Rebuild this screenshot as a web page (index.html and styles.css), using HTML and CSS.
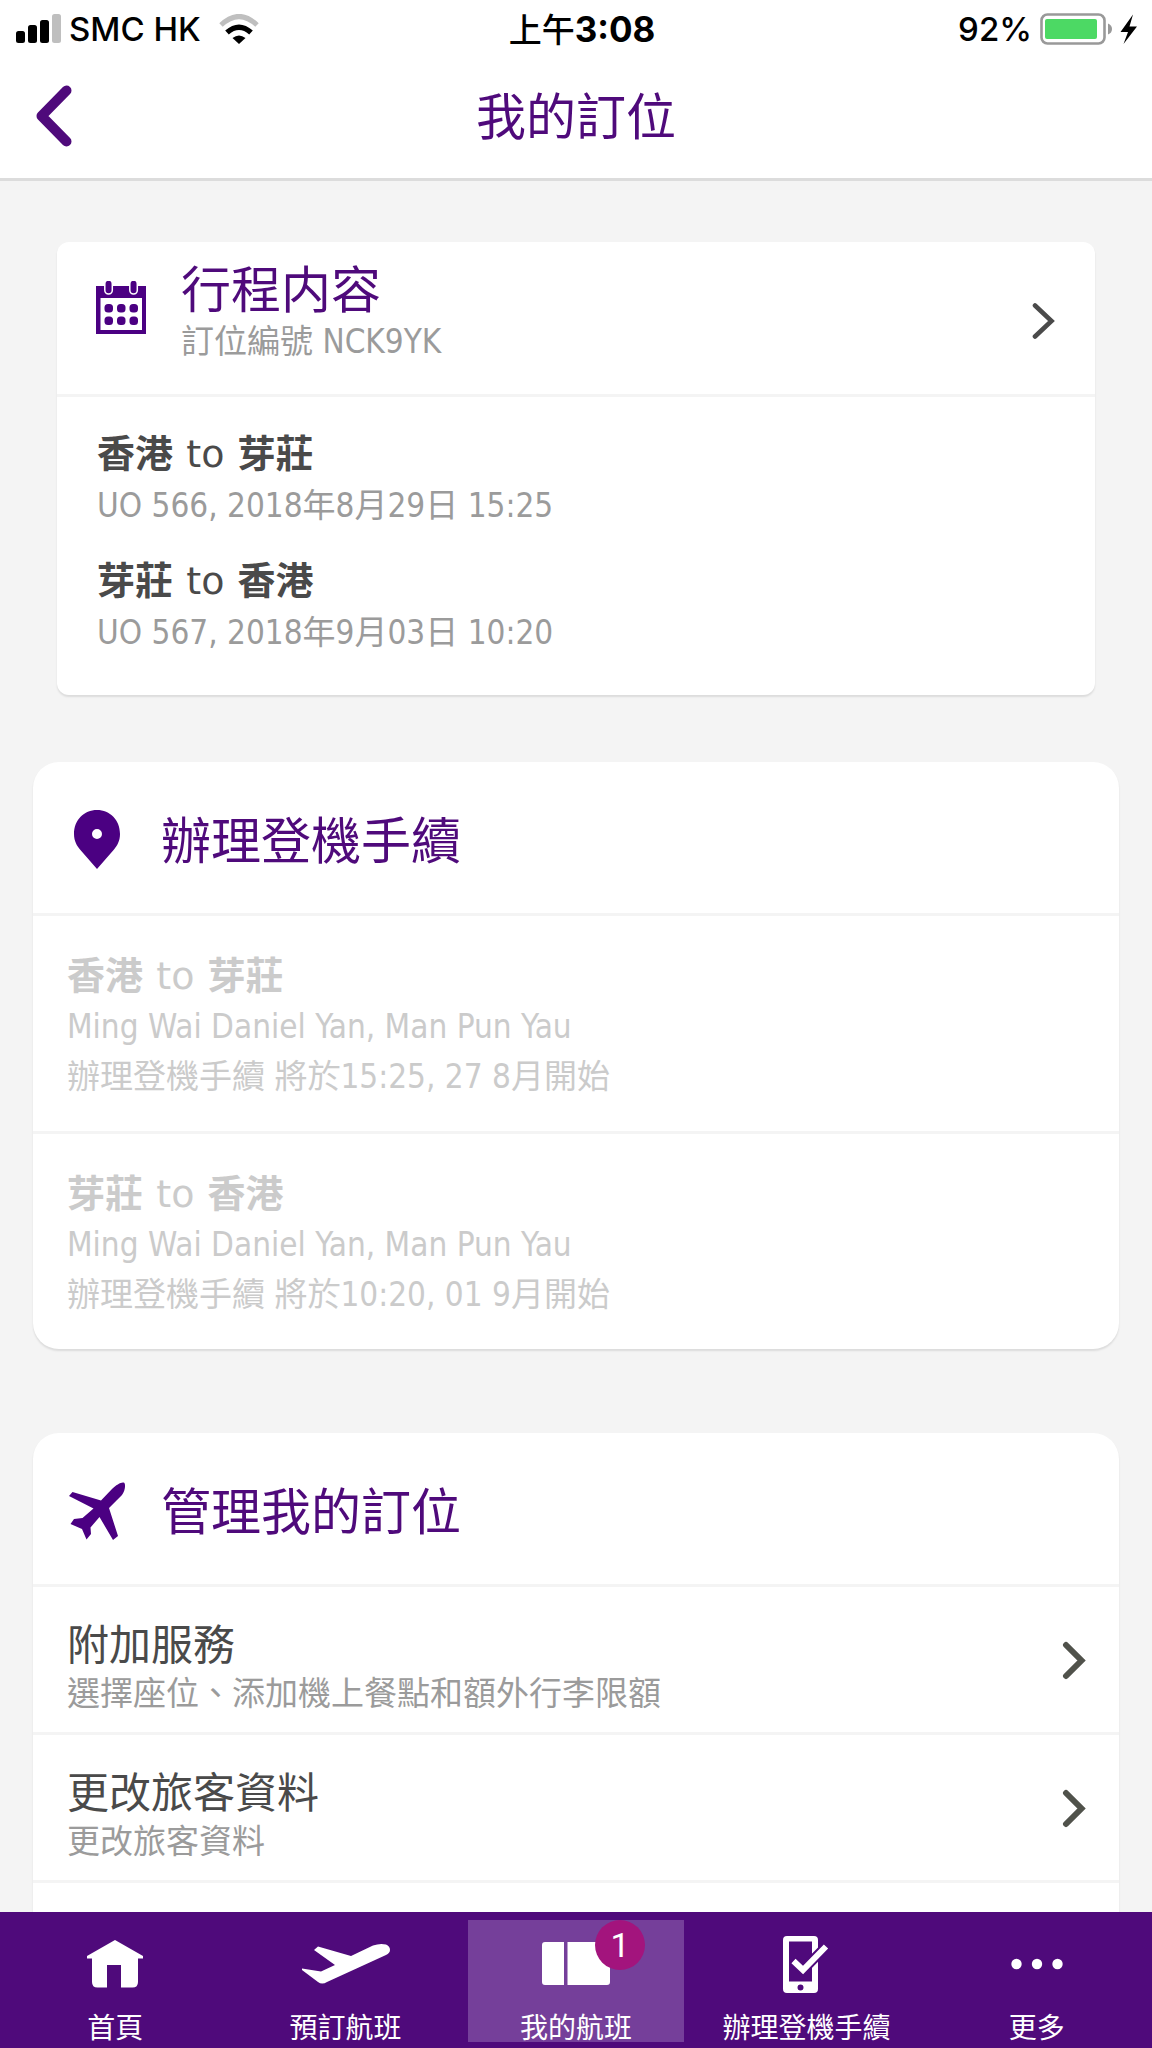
FILE: index.html
```html
<!DOCTYPE html>
<html lang="zh-Hant-HK">
<head>
<meta charset="utf-8">
<meta name="viewport" content="width=device-width, initial-scale=1">
<title>我的訂位</title>
<link rel="stylesheet" href="styles.css">
</head>
<body>
<div class="app">
  <div class="status">
    <div class="status-left">
      <svg width="45" height="30" viewBox="0 0 45 30" aria-hidden="true">
        <rect x="0" y="17" width="9" height="12" rx="2.5"/>
        <rect x="12" y="11" width="9" height="18" rx="2.5"/>
        <rect x="24" y="6" width="9" height="23" rx="2.5"/>
        <rect x="36" y="0" width="9" height="29" rx="2.5" fill="#bfbfbf"/>
      </svg>
      <span class="carrier">SMC HK</span>
      <svg class="wifi" width="40" height="31" viewBox="0 0 40 31" fill="none" aria-hidden="true">
        <path d="M2 11Q20 -6 38 11" stroke="#bfbfbf" stroke-width="5"/>
        <path d="M8 18.500Q20 8 32 18.500" stroke="#000" stroke-width="5.500"/>
        <path d="M13.500 24Q20 19 26.500 24L20 30Z" fill="#000"/>
      </svg>
    </div>
    <div class="clock"><span class="noon">上午</span>3:08</div>
    <div class="status-right">
      <span>92%</span>
      <svg width="98" height="33" viewBox="0 0 98 33" aria-hidden="true">
        <rect x="1.500" y="1.500" width="63" height="29" rx="6" fill="none" stroke="#999" stroke-width="2.600"/>
        <rect x="5" y="6" width="52" height="20" rx="2" fill="#4cd964"/>
        <path d="M68 10.500Q72 12 72 16T68 21.500Z" fill="#999"/>
        <path d="M93 1.500L80.500 19H88L83.500 31L97 13.500H89.500Z"/>
      </svg>
    </div>
  </div>

  <header class="topbar">
    <button class="back" type="button" aria-label="返回">
      <svg width="36" height="62" viewBox="0 0 36 62" fill="none" stroke="currentColor" stroke-width="10" stroke-linecap="round" stroke-linejoin="round"><path d="M30.500 5.500L5.500 31L30.500 56.500"/></svg>
    </button>
    <h1 class="topbar-title">我的訂位</h1>
  </header>

  <main class="content">
    <section class="card card-trip">
      <a class="trip-head" href="#trip">
        <svg class="trip-icon" width="50" height="53" viewBox="0 0 50 53" aria-hidden="true">
          <path fill="#4b0082" fill-rule="evenodd" d="M0 5H50V53H0ZM4.500 17V49H46V17Z"/>
          <g fill="#4b0082" stroke="#fff" stroke-width="1.500">
            <rect x="8.800" y="-1" width="7.500" height="14" rx="3.700"/>
            <rect x="33.800" y="-1" width="7.500" height="14" rx="3.700"/>
          </g>
          <g fill="#4b0082">
            <rect x="8.500" y="23" width="8.500" height="8.500" rx="3.500"/><rect x="21" y="23" width="8.500" height="8.500" rx="3.500"/><rect x="33.500" y="23" width="8.500" height="8.500" rx="3.500"/>
            <rect x="8.500" y="35.500" width="8.500" height="8.500" rx="3.500"/><rect x="21" y="35.500" width="8.500" height="8.500" rx="3.500"/><rect x="33.500" y="35.500" width="8.500" height="8.500" rx="3.500"/>
          </g>
        </svg>
        <div class="grow">
          <h2 class="card-title">行程内容</h2>
          <p class="booking">訂位編號 NCK9YK</p>
        </div>
        <svg class="trip-chevron" width="23" height="38" viewBox="0 0 23 38" fill="none" stroke="#4a4a4a" stroke-width="4.600" stroke-linecap="round"><path d="M3 3.500L19.500 19L3 34.500"/></svg>
      </a>
      <div class="trip-body">
        <div>
          <h3 class="route">香港 <span class="to">to</span> 芽莊</h3>
          <p class="date">UO 566, 2018年8月29日 15:25</p>
        </div>
        <div>
          <h3 class="route">芽莊 <span class="to">to</span> 香港</h3>
          <p class="date">UO 567, 2018年9月03日 10:20</p>
        </div>
      </div>
    </section>

    <section class="card card-round">
      <div class="card-head">
        <span class="head-icon">
          <svg width="48" height="60" viewBox="0 0 48 60" aria-hidden="true"><path fill="#4b0082" fill-rule="evenodd" d="M24 0C37 0 47 10 47 24C47 31 44 36 41 39.500L24 59L7 39.500C4 36 1 31 1 24C1 10 11 0 24 0ZM24 19A5 5 0 1 0 24 29A5 5 0 1 0 24 19Z"/></svg>
        </span>
        <h2 class="card-title">辦理登機手續</h2>
      </div>
      <div class="checkin">
        <h3 class="route">香港 <span class="to">to</span> 芽莊</h3>
        <p>Ming Wai Daniel Yan, Man Pun Yau</p>
        <p>辦理登機手續 將於15:25, 27 8月開始</p>
      </div>
      <div class="checkin">
        <h3 class="route">芽莊 <span class="to">to</span> 香港</h3>
        <p>Ming Wai Daniel Yan, Man Pun Yau</p>
        <p>辦理登機手續 將於10:20, 01 9月開始</p>
      </div>
    </section>

    <section class="card card-round card-manage">
      <div class="card-head">
        <span class="head-icon">
          <svg width="58" height="58" viewBox="0 0 58 58" aria-hidden="true"><path fill="#4b0082" d="M55.500 0.500C58 1 57.500 8 54 13L41 26L50 54L45 58L31.500 35L22.500 45.500L23 52L18.500 57.500L14 47L2.500 42L6 37L14.500 36L25.500 26.500L1 14L4.500 10L33 18.500L44 7C48 3 53 0 55.500 0.500Z"/></svg>
        </span>
        <h2 class="card-title">管理我的訂位</h2>
      </div>
      <a class="row" href="#services">
        <div class="row-text">
          <h3 class="row-title">附加服務</h3>
          <p class="row-sub">選擇座位、添加機上餐點和額外行李限額</p>
        </div>
        <svg width="24" height="40" viewBox="0 0 24 40" fill="none" stroke="#50524b" stroke-width="6" stroke-linecap="round"><path d="M4 5L19.500 20.500L4 36"/></svg>
      </a>
      <a class="row" href="#passengers">
        <div class="row-text">
          <h3 class="row-title">更改旅客資料</h3>
          <p class="row-sub">更改旅客資料</p>
        </div>
        <svg width="24" height="40" viewBox="0 0 24 40" fill="none" stroke="#50524b" stroke-width="6" stroke-linecap="round"><path d="M4 5L19.500 20.500L4 36"/></svg>
      </a>
      <div class="row"></div>
    </section>
  </main>

  <nav class="tabs">
    <a class="tab" href="#home">
      <svg width="56" height="64" viewBox="0 0 56 64" fill="#fff" aria-hidden="true"><path d="M28 8L56 24V26.500H51V50Q51 55.500 45.500 55.500H34V33H20V55.500H10.500Q5 55.500 5 50V26.500H0V24Z"/></svg>
      <span>首頁</span>
    </a>
    <a class="tab" href="#book">
      <svg width="88" height="64" viewBox="0 0 88 64" fill="#fff" aria-hidden="true"><path d="M0 38V36.500L19 39.500L33 33L12 18L16 14.500L49 24L71 13.500Q78 11 84 12.500Q88 14 88 18Q88 21 84 23L25 50Q20 53 16 50Z"/></svg>
      <span>預訂航班</span>
    </a>
    <a class="tab tab-active" href="#flights" aria-current="page">
      <span class="ticket">
        <svg width="68" height="64" viewBox="0 0 68 64" fill="#fff" aria-hidden="true"><path d="M3 10H22V53H3Q0 53 0 50V13Q0 10 3 10ZM25.500 10H65Q68 10 68 13V50Q68 53 65 53H25.500Z"/></svg>
        <span class="badge">1</span>
      </span>
      <span>我的航班</span>
    </a>
    <a class="tab" href="#checkin">
      <svg width="46" height="64" viewBox="0 0 46 64" aria-hidden="true">
        <path fill="#fff" fill-rule="evenodd" d="M4 4H31Q35 4 35 8V57Q35 61 31 61H4Q0 61 0 57V8Q0 4 4 4ZM6 9.500V49.500H29V9.500ZM17.500 52.500A3 3 0 1 0 17.500 58.500A3 3 0 1 0 17.500 52.500Z"/>
        <path d="M10.500 29L20 38L43 14.500" fill="none" stroke="#4f0a7b" stroke-width="10"/>
        <path d="M10.500 29L20 38L43 14.500" fill="none" stroke="#fff" stroke-width="6"/>
      </svg>
      <span>辦理登機手續</span>
    </a>
    <a class="tab" href="#more">
      <svg width="52" height="64" viewBox="0 0 52 64" fill="#fff" aria-hidden="true"><circle cx="5.500" cy="32" r="5.200"/><circle cx="26" cy="32" r="5.200"/><circle cx="46.500" cy="32" r="5.200"/></svg>
      <span>更多</span>
    </a>
  </nav>
</div>
</body>
</html>
```
FILE: styles.css
```css
* {
  box-sizing: border-box;
  margin: 0;
  padding: 0;
}

body {
  font-family: "DejaVu Sans Condensed", "Noto Sans CJK TC", sans-serif;
  font-size: 33px;
  background: #f4f4f4;
  color: #9b9b9b;
}

h1, h2, h3 {
  font-weight: 400;
}

a {
  color: inherit;
  text-decoration: none;
}

svg {
  display: block;
  flex: none;
}

.app {
  display: flex;
  flex-direction: column;
  height: 100vh;
}

.grow {
  flex: 1;
}

/* Status bar */
.status {
  display: grid;
  grid-template-columns: 1fr auto 1fr;
  align-items: center;
  height: 58px;
  padding: 0 14px 0 16px;
  background: #fff;
  color: #000;
  font-family: "Inter", "Noto Sans CJK TC", sans-serif;
  font-size: 33px;
  font-weight: 500;
  line-height: 40px;
}

.status-left,
.status-right {
  display: flex;
  align-items: center;
  gap: 8px;
}

.status-right {
  justify-content: flex-end;
}

.wifi {
  margin-left: 10px;
}

.clock {
  padding-left: 10px;
  font-size: 35px;
  font-weight: 700;
}

.noon {
  font-size: 33px;
  font-weight: 500;
}

/* Title bar */
.topbar {
  display: grid;
  grid-template-columns: 1fr auto 1fr;
  align-items: center;
  height: 123px;
  padding: 0 36px 4px;
  background: #fff;
  border-bottom: 3px solid #dcdcdc;
}

.back {
  justify-self: start;
  border: 0;
  background: none;
  color: #4f0a7b;
  cursor: pointer;
}

.topbar-title,
.card-title,
.row-title,
.tabs {
  font-family: "Noto Sans", "Noto Sans CJK TC", sans-serif;
}

.topbar-title,
.card-title {
  color: #4f0a7b;
  font-size: 50px;
  line-height: 54px;
}

/* Scrolling area */
.content {
  flex: 1;
  min-height: 0;
  overflow-y: auto;
  scrollbar-width: none;
  padding: 61px 33px 0;
}

.card {
  background: #fff;
  box-shadow: 0 2px 2px rgba(0, 0, 0, 0.1);
}

.card-trip {
  margin: 0 24px 67px;
  border-radius: 12px;
}

.trip-head {
  display: flex;
  align-items: center;
  padding: 20px 40px 26px 39px;
  border-bottom: 3px solid #f4f4f4;
}

.trip-icon {
  margin: 0 35px 16px 0;
}

.trip-chevron {
  margin-top: 12px;
}

.booking,
.date,
.route {
  line-height: 52px;
}

.trip-body {
  display: grid;
  gap: 23px;
  padding: 31px 40px 36px;
}

.route {
  color: #4a4a4a;
  font-family: "DejaVu Sans", "Noto Sans CJK TC", sans-serif;
  font-size: 38px;
  font-weight: 700;
}

.to {
  font-weight: 400;
}

.card-round {
  margin-bottom: 84px;
  border-radius: 26px;
}

.card-head {
  display: flex;
  align-items: center;
  height: 154px;
  padding: 5px 34px 0;
  border-bottom: 3px solid #f4f4f4;
}

.head-icon {
  display: flex;
  justify-content: center;
  width: 60px;
  margin-right: 34px;
}

.checkin {
  padding: 34px 34px 29px;
  line-height: 50px;
}

.checkin + .checkin {
  border-top: 3px solid #f4f4f4;
}

.checkin,
.checkin .route {
  color: #cbcbcb;
}

.row {
  display: flex;
  align-items: center;
  min-height: 148px;
  padding: 0 33px 0 34px;
  border-bottom: 3px solid #f4f4f4;
  line-height: 50px;
}

.row-text {
  flex: 1;
  padding-top: 18px;
}

.row-title {
  color: #4a4a4a;
  font-size: 42px;
}

/* Bottom tabs */
.tabs {
  display: grid;
  grid-template-columns: repeat(5, 1fr);
  padding: 8px 0 6px;
  background: #4f0a7b;
  color: #fff;
  font-size: 28px;
  line-height: 30px;
}

.tab {
  display: flex;
  flex-direction: column;
  align-items: center;
  gap: 16px;
  margin: 0 7px;
  padding: 12px 0 0;
  white-space: nowrap;
}

.tab-active {
  background: #753f9a;
}

.ticket {
  position: relative;
}

.badge {
  position: absolute;
  top: -12px;
  right: -35px;
  width: 50px;
  height: 50px;
  border-radius: 50%;
  background: #a3147d;
  font-family: "Roboto", sans-serif;
  font-size: 34px;
  line-height: 50px;
  text-align: center;
}
```
